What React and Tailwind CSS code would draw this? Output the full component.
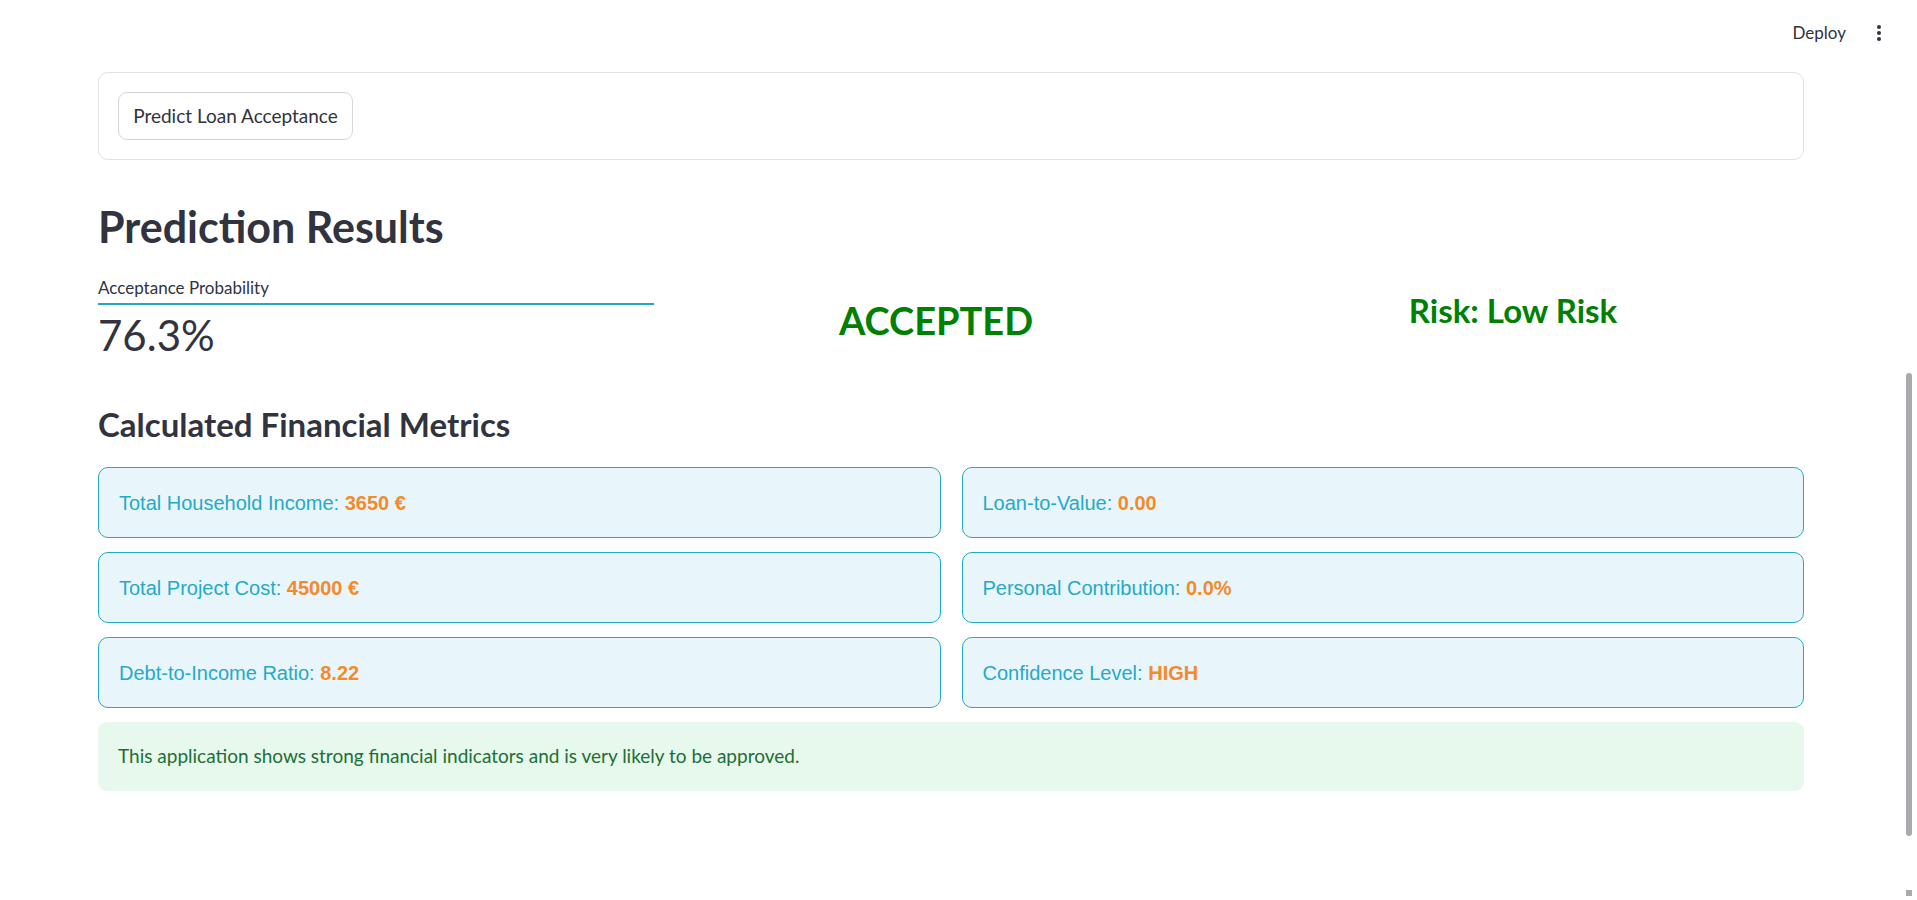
import React from "react";

const metrics = [
  { label: "Total Household Income", value: "3650 €" },
  { label: "Loan-to-Value", value: "0.00" },
  { label: "Total Project Cost", value: "45000 €" },
  { label: "Personal Contribution", value: "0.0%" },
  { label: "Debt-to-Income Ratio", value: "8.22" },
  { label: "Confidence Level", value: "HIGH" },
];

function MetricCard({ label, value }) {
  return (
    <div className="h-[71px] flex items-center px-[20px] rounded-[10px] border border-[#22aac8] bg-[#e8f6fb] font-['Liberation_Sans',Arial,sans-serif] text-[20px] text-[#26a9c8]">
      <span>
        {label}: <span className="font-bold text-[#f58a2b]">{value}</span>
      </span>
    </div>
  );
}

export default function App() {
  return (
    <div className="relative min-h-screen bg-white font-['Lato',sans-serif] text-[#31333f]">
      {/* Top toolbar */}
      <header className="h-[66px] flex items-center justify-end pr-[36px] gap-[31px]">
        <span className="text-[17px]">Deploy</span>
        <svg width="4" height="16" viewBox="0 0 4 16" fill="#31333f">
          <circle cx="2" cy="2" r="2" />
          <circle cx="2" cy="8" r="2" />
          <circle cx="2" cy="14" r="2" />
        </svg>
      </header>

      <main className="ml-[98px] w-[1706px] pt-[6px] pb-[100px]">
        {/* Form */}
        <div className="border border-[#e2e2e6] rounded-[10px] p-[19px]">
          <button className="w-[235px] h-[48px] border border-[#d6d6da] rounded-[9px] bg-white text-[19px] flex items-center justify-center">
            Predict Loan Acceptance
          </button>
        </div>

        <h1 className="mt-[46px] text-[43px] leading-[42px] font-bold">Prediction Results</h1>

        <div className="grid grid-cols-3 gap-[19px] mt-[32px]">
          <div>
            <div className="text-[17px] leading-[16px] pb-[7px] border-b-2 border-[#22a9c5]">
              Acceptance Probability
            </div>
            <div className="mt-[9px] text-[42px] leading-[42px]">76.3%</div>
          </div>
          <div className="pr-[30px] text-center">
            <div className="mt-[21px] text-[38px] leading-[38px] font-bold text-[#008000]">ACCEPTED</div>
          </div>
          <div className="pr-[26px] text-center">
            <div className="mt-[14px] text-[33px] leading-[33px] font-bold text-[#008000]">Risk: Low Risk</div>
          </div>
        </div>

        <h3 className="mt-[52px] text-[33px] leading-[33px] font-bold">Calculated Financial Metrics</h3>

        <div className="grid grid-cols-2 gap-x-[21px] gap-y-[14px] mt-[26px]">
          {metrics.map((m) => (
            <MetricCard key={m.label} label={m.label} value={m.value} />
          ))}
        </div>

        <div className="mt-[14px] h-[69px] flex items-center px-[20px] rounded-[9px] bg-[#e7f8ec] text-[19px] text-[#1d6f35]">
          This application shows strong financial indicators and is very likely to be approved.
        </div>
      </main>

      {/* scrollbar */}
      <div className="absolute right-[5px] top-[373px] w-[6px] h-[463px] rounded-full bg-[#a9a9ae]" />
      <div className="absolute right-[5px] top-[890px] w-[6px] h-[6px] bg-[#a9a9ae]" />
    </div>
  );
}
